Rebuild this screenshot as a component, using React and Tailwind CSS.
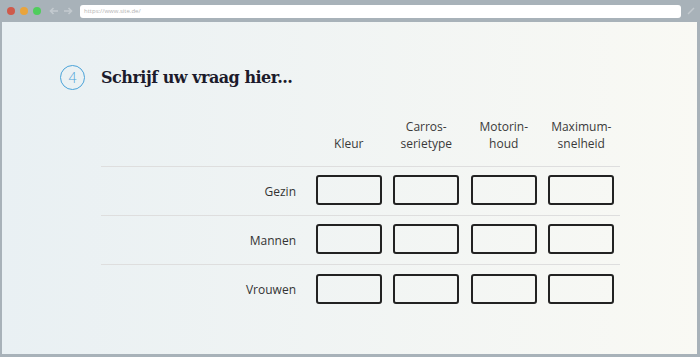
import React from "react";

const columns = [
  ["Kleur"],
  ["Carros-", "serietype"],
  ["Motorin-", "houd"],
  ["Maximum-", "snelheid"],
];

const rows = ["Gezin", "Mannen", "Vrouwen"];

const BrowserBar = () => (
  <div className="h-[22px] flex items-center shrink-0">
    <div className="flex items-center gap-[5px] ml-[7px]">
      <span className="w-[8px] h-[8px] rounded-full bg-[#cf5a4b]" />
      <span className="w-[8px] h-[8px] rounded-full bg-[#e9a43c]" />
      <span className="w-[8px] h-[8px] rounded-full bg-[#4fcd5c]" />
    </div>
    <div className="flex items-center gap-[4px] ml-[8px] text-[#c3cacf]">
      <svg width="10" height="10" viewBox="0 0 10 10" fill="none" stroke="currentColor" strokeWidth="1.6">
        <path d="M9 5H1.5M4.5 2L1.5 5l3 3" />
      </svg>
      <svg width="10" height="10" viewBox="0 0 10 10" fill="none" stroke="currentColor" strokeWidth="1.6">
        <path d="M1 5h7.5M5.5 2l3 3-3 3" />
      </svg>
    </div>
    <div className="ml-[7px] w-[601px] h-[13px] bg-white rounded-[3px] flex items-center pl-[4px]">
      <span className="text-[6px] leading-none text-[#b4b4b4] font-['Open_Sans',sans-serif]">
        https://www.site.de/
      </span>
    </div>
    <svg className="ml-[6px]" width="8" height="8" viewBox="0 0 8 8" fill="none" stroke="#c3cacf" strokeWidth="1.4">
      <path d="M1 7L7 1" />
    </svg>
  </div>
);

export default function App() {
  return (
    <div className="w-[700px] h-[357px] bg-[#a8b2b9] flex flex-col overflow-hidden">
      <BrowserBar />
      <div className="flex-1 ml-[2px] mr-[3px] mb-[3px] bg-linear-to-r from-[#e9f0f3] to-[#f9f9f4] pt-[43px] pl-[58px] font-['Open_Sans',sans-serif]">
        <div className="flex items-center gap-[16px]">
          <div className="w-[25px] h-[25px] rounded-full border-[1.3px] border-[#4aa3d9] flex items-center justify-center text-[14px] font-light text-[#4aa3d9] leading-none">
            4
          </div>
          <h1 className="font-['DejaVu_Serif',serif] font-bold text-[16px] tracking-[-0.5px] text-[#1c1b2b] leading-none">
            Schrijf uw vraag hier...
          </h1>
        </div>

        <div className="ml-[41px] mt-[28px] grid grid-cols-[209px_repeat(4,77.5px)] text-[12px] leading-[17px]">
          <div className="border-b border-[#dedede]" />
          {columns.map((lines, i) => (
            <div
              key={i}
              className="border-b border-[#dedede] pb-[14px] flex flex-col items-center justify-end text-[#3a3a3a]"
            >
              {lines.map((l) => (
                <span key={l}>{l}</span>
              ))}
            </div>
          ))}

          {rows.map((label, r) => {
            const line = r < rows.length - 1 ? "border-b border-[#dedede]" : "";
            return (
              <React.Fragment key={label}>
                <div className={`h-[49px] flex items-center justify-end pr-[14px] text-[#333] ${line}`}>
                  {label}
                </div>
                {columns.map((_, c) => (
                  <div key={c} className={`h-[49px] flex items-center justify-center pb-[2px] ${line}`}>
                    <div className="w-[66px] h-[30px] border-2 border-[#222] rounded-[3px]" />
                  </div>
                ))}
              </React.Fragment>
            );
          })}
        </div>
      </div>
    </div>
  );
}
